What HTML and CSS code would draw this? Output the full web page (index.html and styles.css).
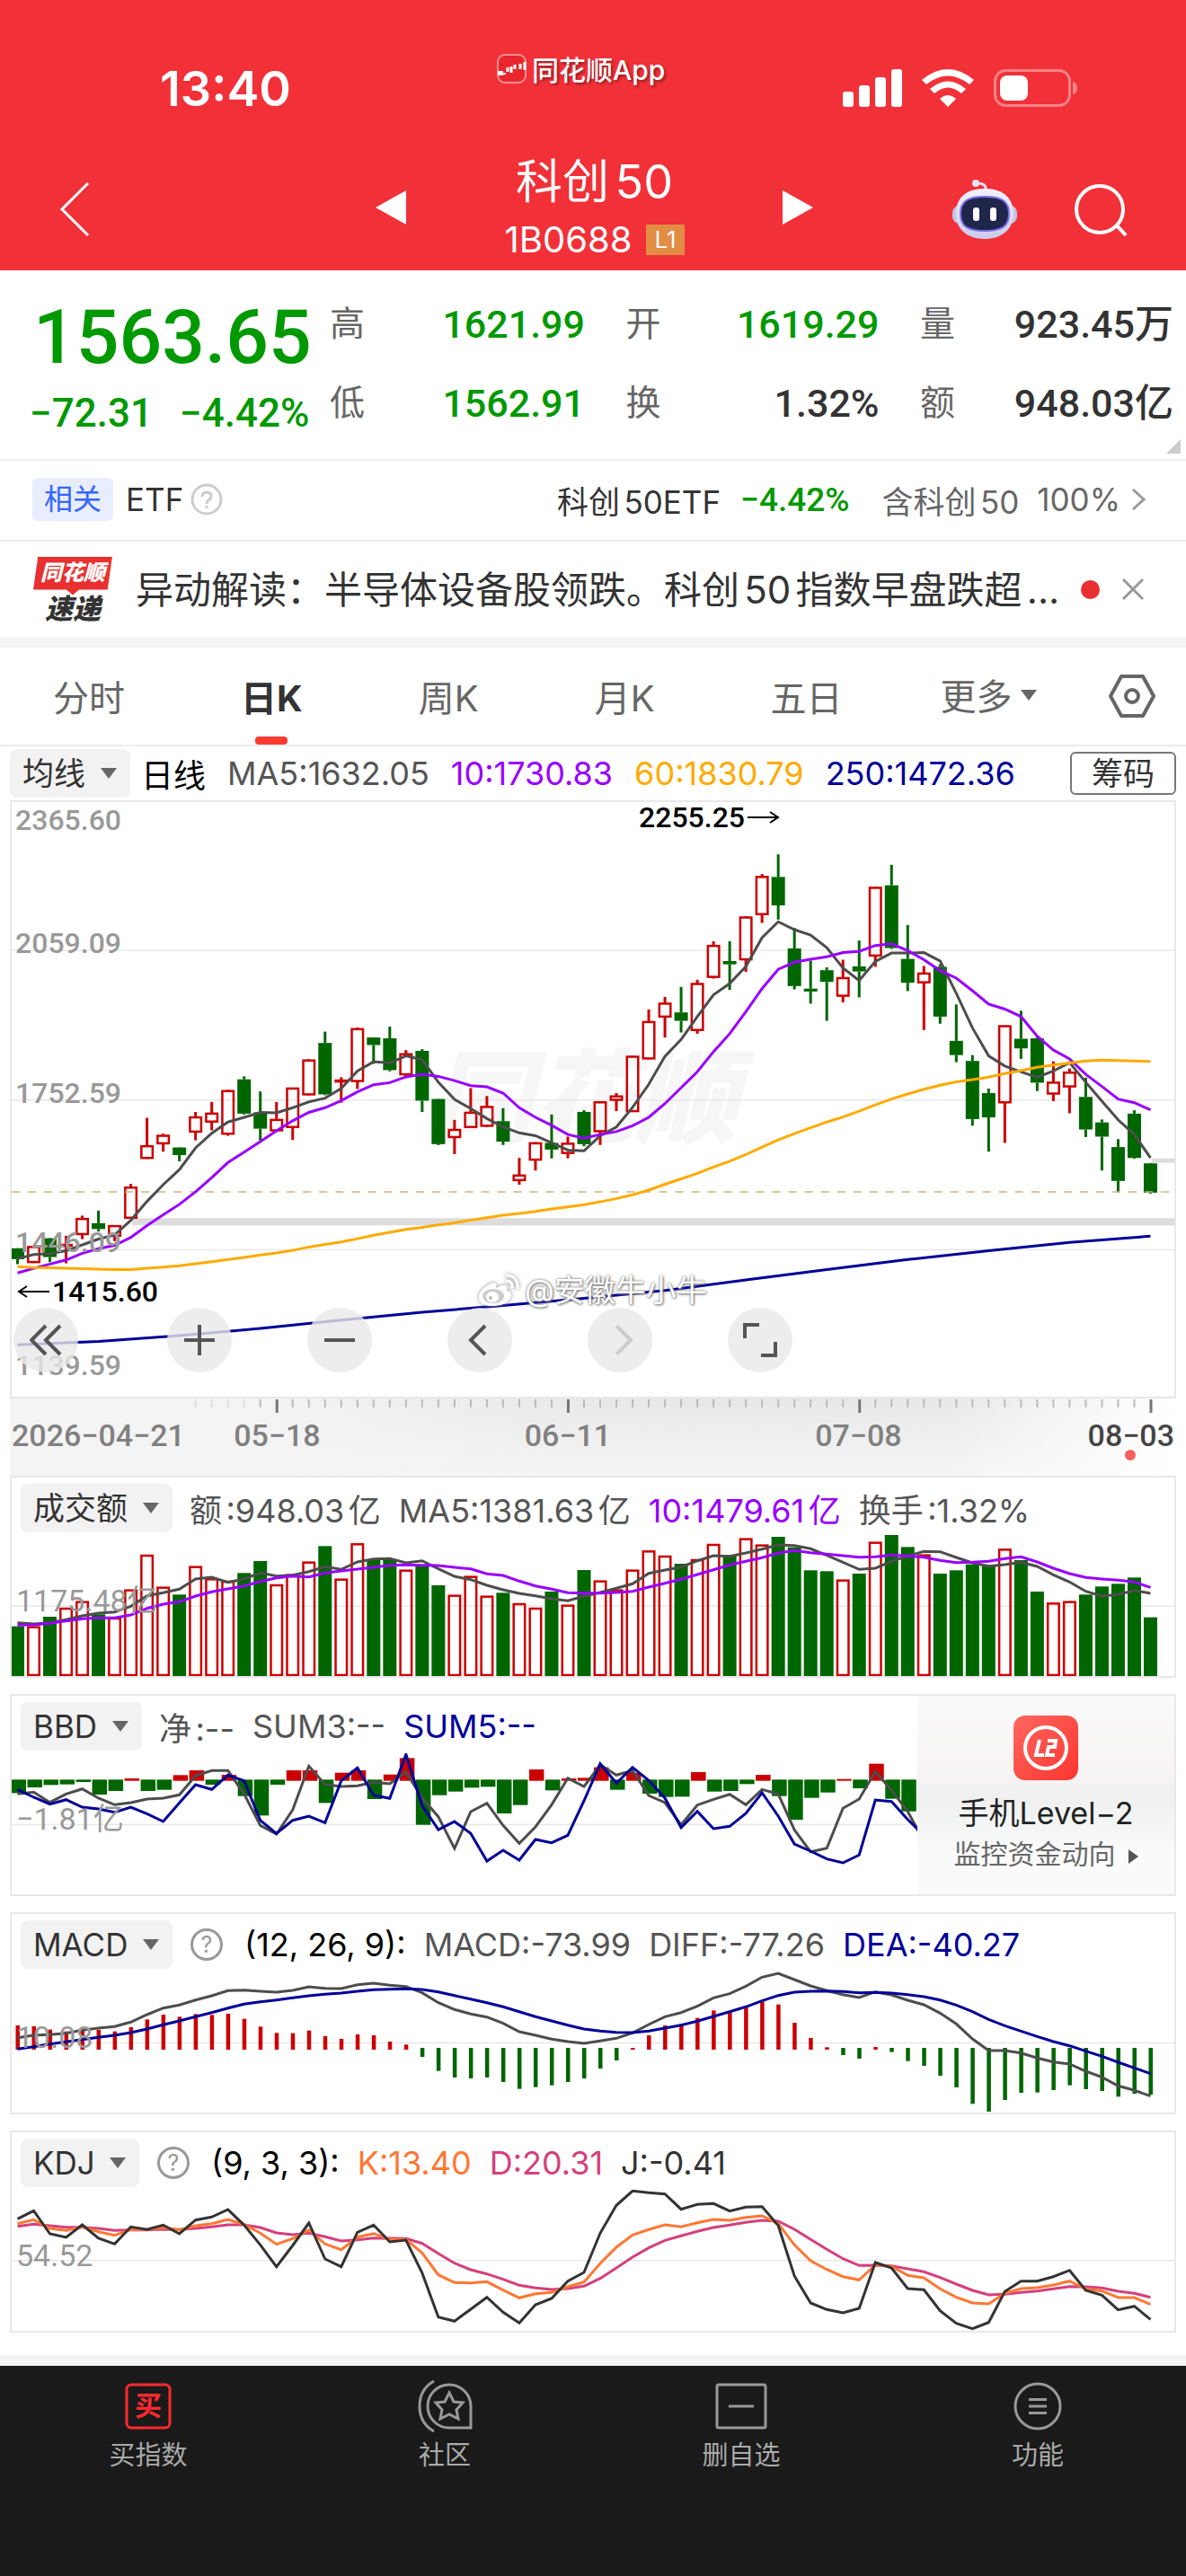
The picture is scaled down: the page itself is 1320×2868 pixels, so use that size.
FILE: index.html
```html
<!DOCTYPE html>
<html lang="zh-CN">
<head>
    <meta charset="utf-8">
    <meta name="viewport" content="width=device-width, initial-scale=1">
    <title>科创50 1B0688</title>
    <link rel="stylesheet" href="styles.css">
</head>
<body>
    <header class="top">
        <div class="status">
            <span class="clock">13:40</span>
            <span class="app-name">
                <svg width="33" height="33" viewBox="0 0 33 33"><rect x="1" y="1" width="31" height="31" rx="8" fill="#e8262c" stroke="#f88f93" stroke-width="2"/><path d="M2 20h4v3H2zM7 22h3" stroke="#fff" stroke-width="2" fill="#fff"/><path d="M12 15v5M16 21v-7M20 17v-5M26 11v6M31 9v9" fill="none" stroke="#fff" stroke-width="3"/></svg>
                同花顺App
            </span>
            <span class="phone">
                <svg width="66" height="42" viewBox="0 0 66 42" fill="#fff"><rect y="25" width="12" height="17" rx="3"/><rect x="18" y="18" width="12" height="24" rx="3"/><rect x="36" y="9" width="12" height="33" rx="3"/><rect x="54" width="12" height="42" rx="3"/></svg>
                <svg width="58" height="42" viewBox="0 0 58 42" fill="#fff"><path d="M29 42l-9-9q9-8 18 0z"/><path d="M14 27l-5-5q20-17 40 0l-5 5q-15-13-30 0z"/><path d="M5 17L0 12q29-24 58 0l-5 5q-24-19-48 0z"/></svg>
                <svg width="94" height="42" viewBox="0 0 94 42"><rect x="1.5" y="1.5" width="83" height="39" rx="12" fill="none" stroke="#f98387" stroke-width="3"/><rect x="7" y="7" width="31" height="28" rx="8" fill="#fff"/><path d="M88 14q5 1 5 7t-5 7z" fill="#f98387"/></svg>
            </span>
        </div>
        <div class="nav">
            <button class="icon-btn back" aria-label="返回"><svg width="34" height="62" viewBox="0 0 34 62"><path d="M32 2L3 31l29 29" fill="none" stroke="#fff" stroke-width="3"/></svg></button>
            <div class="stock">
                <button class="icon-btn" aria-label="上一个"><svg width="34" height="38" viewBox="0 0 34 38"><path d="M34 0v38L0 19z" fill="#fff"/></svg></button>
                <div class="stock-name">
                    <h1>科创50</h1>
                    <p>1B0688 <span class="l1">L1</span></p>
                </div>
                <button class="icon-btn" aria-label="下一个"><svg width="34" height="38" viewBox="0 0 34 38"><path d="M0 0v38l34-19z" fill="#fff"/></svg></button>
            </div>
            <div class="nav-right">
                <button class="icon-btn" aria-label="助手"><svg width="74" height="68" viewBox="0 0 74 68"><defs><linearGradient id="head" x2="0" y2="1"><stop stop-color="#f2f2fd"/><stop offset="1" stop-color="#c9cbea"/></linearGradient></defs><path d="M38 12Q39 5 28 5" fill="none" stroke="#dcddf3" stroke-width="3"/><circle cx="27" cy="5" r="4" fill="#e5e6f8"/><rect x="1" y="30" width="72" height="20" rx="8" fill="#c3c6e6"/><path d="M37 11c22 0 32 12 32 28S57 67 37 67 5 56 5 39s10-28 32-28z" fill="url(#head)"/><path d="M37 20c19 0 27 5 27 19s-8 19-27 19-27-5-27-19 8-19 27-19z" fill="#20264a" stroke="#7d6cf0" stroke-width="2"/><rect x="24" y="32" width="7" height="15" rx="3" fill="#fff"/><rect x="43" y="32" width="7" height="15" rx="3" fill="#fff"/></svg></button>
                <button class="icon-btn" aria-label="搜索"><svg width="62" height="62" viewBox="0 0 62 62" fill="none" stroke="#fff" stroke-width="4"><circle cx="29" cy="31" r="26"/><path d="M48 49l10 11"/></svg></button>
            </div>
        </div>
    </header>

    <section class="quote">
        <div class="price">
            <strong>1563.65</strong>
            <p><span>−72.31</span><span>−4.42%</span></p>
        </div>
        <dl>
            <div><dt>高</dt><dd class="down">1621.99</dd></div>
            <div><dt>开</dt><dd class="down">1619.29</dd></div>
            <div><dt>量</dt><dd>923.45万</dd></div>
            <div><dt>低</dt><dd class="down">1562.91</dd></div>
            <div><dt>换</dt><dd>1.32%</dd></div>
            <div><dt>额</dt><dd>948.03亿</dd></div>
        </dl>
        <i class="corner"></i>
    </section>

    <a class="related" href="#">
        <span class="tag">相关</span>
        <span>ETF</span>
        <svg width="36" height="36" viewBox="0 0 36 36" fill="none" stroke="#ccc" stroke-width="3"><circle cx="18" cy="18" r="16"/><path d="M13 15q0-5 5-5t5 4q0 3-3 5-2 1-2 4M18 25v3"/></svg>
        <span class="etf">科创50ETF</span>
        <span class="down num">−4.42%</span>
        <span class="grey">含科创50</span>
        <span class="grey">100%</span>
        <svg width="16" height="26" viewBox="0 0 16 26" fill="none" stroke="#999" stroke-width="3"><path d="M2 2l12 11L2 24"/></svg>
    </a>

    <section class="news">
        <span class="news-logo"><b>同花顺</b><em>速递</em></span>
        <a href="#">异动解读：半导体设备股领跌。科创50指数早盘跌超...</a>
        <i class="dot"></i>
        <button class="icon-btn" aria-label="关闭"><svg width="26" height="26" viewBox="0 0 26 26"><path d="M2 2l22 22M24 2L2 24" stroke="#999" stroke-width="3"/></svg></button>
    </section>

    <nav class="tabs">
        <button>分时</button>
        <button class="active">日K</button>
        <button>周K</button>
        <button>月K</button>
        <button>五日</button>
        <span class="drop more"><select aria-label="更多周期"><option>更多</option></select></span>
        <button class="icon-btn" aria-label="设置"><svg width="52" height="48" viewBox="0 0 52 48" fill="none" stroke="#666" stroke-width="4"><path d="M14 2h24l12 22-12 22H14L2 24z" stroke-linejoin="round"/><circle cx="26" cy="24" r="7"/></svg></button>
    </nav>

    <main class="charts">
        <div class="legend main-legend">
            <span class="drop"><select aria-label="主图指标"><option>均线</option></select></span>
            <span class="black">日线</span>
            <span>MA5:1632.05</span>
            <span class="purple">10:1730.83</span>
            <span class="orange">60:1830.79</span>
            <span class="navy">250:1472.36</span>
            <button class="chips">筹码</button>
        </div>
        <div class="kline">
            <b class="ghost">同花顺</b>
            <svg id="kline" viewBox="0 0 1293 662" preserveAspectRatio="none"></svg>
            <div class="scale num">
                <span>2365.60</span><span>2059.09</span><span>1752.59</span><span>1446.09</span><span>1139.59</span>
            </div>
            <span class="mark high num">2255.25<svg width="37" height="16" viewBox="0 0 37 16"><path d="M1 8h34M26 2l9 6-9 6" fill="none" stroke="#000" stroke-width="2"/></svg></span>
            <span class="mark low num"><svg width="37" height="16" viewBox="0 0 37 16"><path d="M36 8H2M11 2L2 8l9 6" fill="none" stroke="#000" stroke-width="2"/></svg>1415.60</span>
            <span class="weibo"><svg width="50" height="40" viewBox="0 0 50 40"><path d="M20 11q-9 2-15 10C-2 32 8 38 20 37q16-1 19-11 1-5-5-6 2-6-3-6t-9 3q2-5-2-6z" fill="#fff"/><ellipse cx="19" cy="26" rx="12" ry="8" fill="#ccc"/><ellipse cx="18" cy="27" rx="7" ry="6" fill="#fff"/><circle cx="16" cy="28" r="2" fill="#bbb"/><path d="M33 3q14 0 13 15M33 9q8 0 7 8" fill="none" stroke="#fff" stroke-width="3"/></svg>@安徽牛小牛</span>
            <div class="tools">
                <button aria-label="最早"><svg width="36" height="36" viewBox="0 0 36 36"><path d="M18 2L2 18l16 16M34 2L18 18l16 16"/></svg></button>
                <button aria-label="放大"><svg width="36" height="36" viewBox="0 0 36 36"><path d="M1 18h34M18 1v34"/></svg></button>
                <button aria-label="缩小"><svg width="36" height="36" viewBox="0 0 36 36"><path d="M1 18h34"/></svg></button>
                <button aria-label="左移"><svg width="36" height="36" viewBox="0 0 36 36"><path d="M24 2L8 18l16 16"/></svg></button>
                <button aria-label="右移" disabled><svg width="36" height="36" viewBox="0 0 36 36"><path d="M14 2l16 16-16 16"/></svg></button>
                <button aria-label="全屏"><svg width="38" height="38" viewBox="0 0 38 38"><path d="M2 17V2h16M36 21v15H20"/></svg></button>
            </div>
        </div>
        <div class="axis num">
            <svg id="ticks" viewBox="0 0 1293 16" preserveAspectRatio="none"></svg>
            <div class="dates"><span>2026−04−21</span><span>05−18</span><span>06−11</span><span>07−08</span><span class="now">08−03</span></div>
        </div>

        <section class="panel">
            <div class="legend">
                <span class="drop"><select aria-label="副图指标一"><option>成交额</option></select></span>
                <span>额:948.03亿</span><span>MA5:1381.63亿</span><span class="purple">10:1479.61亿</span><span>换手:1.32%</span>
            </div>
            <svg id="volume" viewBox="0 0 1293 157" preserveAspectRatio="none"></svg>
            <span class="level num">1175.48亿</span>
        </section>

        <section class="panel">
            <div class="legend">
                <span class="drop"><select aria-label="副图指标二"><option>BBD</option></select></span>
                <span>净:--</span><span>SUM3:--</span><span class="navy">SUM5:--</span>
            </div>
            <svg id="bbd" viewBox="0 0 1293 157" preserveAspectRatio="none"></svg>
            <span class="level num">−1.81亿</span>
            <a class="level2" href="#">
                <svg width="72" height="72" viewBox="0 0 72 72"><defs><linearGradient id="g" x2="1" y2="1"><stop stop-color="#ff6660"/><stop offset="1" stop-color="#fb362f"/></linearGradient></defs><rect width="72" height="72" rx="13" fill="url(#g)"/><circle cx="36" cy="36" r="23" fill="none" stroke="#fff" stroke-width="4"/><path d="M29 27l-4 17h9M38 28h9l-1 7h-7l-2 9h9" fill="none" stroke="#fff" stroke-width="4"/></svg>
                <strong>手机Level−2</strong>
                <small>监控资金动向</small>
            </a>
        </section>

        <section class="panel">
            <div class="legend">
                <span class="drop"><select aria-label="副图指标三"><option>MACD</option></select></span>
                <button class="help" aria-label="MACD说明">?</button>
                <span class="black">(12, 26, 9):</span><span>MACD:-73.99</span><span>DIFF:-77.26</span><span class="navy">DEA:-40.27</span>
            </div>
            <svg id="macd" viewBox="0 0 1293 157" preserveAspectRatio="none"></svg>
            <span class="level num">10.08</span>
        </section>

        <section class="panel">
            <div class="legend">
                <span class="drop"><select aria-label="副图指标四"><option>KDJ</option></select></span>
                <button class="help" aria-label="KDJ说明">?</button>
                <span class="black">(9, 3, 3):</span><span class="k">K:13.40</span><span class="d">D:20.31</span><span class="j">J:-0.41</span>
            </div>
            <svg id="kdj" viewBox="0 0 1293 157" preserveAspectRatio="none"></svg>
            <span class="level num">54.52</span>
        </section>
    </main>

    <footer class="bottom">
        <a href="#"><svg width="54" height="58" viewBox="0 0 54 58"><rect x="3" y="5" width="48" height="48" rx="5" fill="none" stroke="#ff2a2e" stroke-width="3"/><text x="27" y="39" text-anchor="middle" class="buy">买</text></svg>买指数</a>
        <a href="#"><svg width="62" height="58" viewBox="0 0 62 58" fill="none" stroke="#999" stroke-width="3"><path d="M19 1Q3 10 3 29t16 28"/><path d="M60 53V29A24 24 0 1 0 36 53z"/><path d="M36 14l5 10 10 1-7 8 2 10-10-5-10 5 2-10-7-8 10-1z"/></svg>社区</a>
        <a href="#"><svg width="58" height="58" viewBox="0 0 58 58" fill="none" stroke="#999" stroke-width="3"><rect x="2" y="5" width="54" height="48" rx="2"/><path d="M15 29h28"/></svg>删自选</a>
        <a href="#"><svg width="56" height="58" viewBox="0 0 56 58" fill="none" stroke="#999" stroke-width="3"><circle cx="28" cy="29" r="25"/><path d="M18 21.500h20M18 29h20M18 36.500h20"/></svg>功能</a>
    </footer>

    <script src="charts.js"></script>
</body>
</html>
```
FILE: styles.css
```css
* { box-sizing: border-box; }
body { margin: 0; font-family: Inter, "Noto Sans CJK SC", sans-serif; font-size: 35px; color: #333; background: #fff; }
h1, p, dl, dd { margin: 0; }
a { color: inherit; text-decoration: none; }
svg { display: block; flex: none; }
button, select { font: inherit; color: inherit; background: none; border: none; padding: 0; margin: 0; cursor: pointer; }
.num { font-family: Roboto, "Noto Sans CJK SC", sans-serif; }
.down { color: #009900; }
.grey { color: #666; }
.black { color: #000; }
.purple { color: #9900ff; }
.orange { color: #ffaa00; }
.navy { color: #000099; }
.k { color: #ff7733; }
.d { color: #d63f7c; }
.j { color: #333; }
h1, .etf, .related .grey, .news a, .legend { text-autospace: normal; }

/* red header */
.top { background: #f23038; color: #fff; height: 301px; }
.status { display: grid; grid-template-columns: 375px auto 1fr; align-items: center; height: 150px; padding: 46px 120px 0 178px; }
.clock { font-size: 54px; font-weight: 600; }
.app-name { display: flex; align-items: center; gap: 6px; font-size: 30px; font-weight: 500; padding-bottom: 44px; text-shadow: 2px 2px 3px rgba(0, 0, 0, 0.4); }
.phone { display: flex; justify-content: flex-end; gap: 22px; }
.nav { display: grid; grid-template-columns: 1fr 487px 1fr; align-items: center; height: 151px; padding: 14px 63px 0 66px; }
.stock { display: flex; justify-content: space-between; align-items: center; }
.stock > .icon-btn { margin-bottom: 4px; }
.stock-name { text-align: center; }
.stock-name h1 { font-size: 52px; line-height: 68px; font-weight: 400; }
.stock-name p { display: flex; align-items: center; gap: 16px; font-size: 40px; line-height: 60px; }
.l1 { background: #e28c44; font-size: 26px; line-height: 34px; padding: 0 9px; }
.nav-right { display: flex; justify-content: flex-end; align-items: center; gap: 62px; }

/* quote */
.quote { position: relative; display: flex; height: 212px; padding: 26px 14px 0 33px; border-bottom: 2px solid #ededed; font-family: Roboto, "Noto Sans CJK SC", sans-serif; font-weight: 500; font-size: 43px; }
.price { width: 334px; color: #009900; }
.price strong { display: block; padding-left: 4px; font-size: 84px; line-height: 98px; font-weight: 500; }
.price p { display: flex; gap: 30px; font-size: 44px; line-height: 70px; }
.quote dl { flex: 1; display: grid; grid-template-columns: 284px 282px 282px; justify-content: space-between; grid-auto-rows: 88px; }
.quote dl div { display: flex; justify-content: space-between; line-height: 68px; }
.quote dt { font-size: 39px; font-weight: 400; color: #666; }
.corner { position: absolute; right: 6px; bottom: 6px; border: 8px solid transparent; border-right-color: #ccc; border-bottom-color: #ccc; }

.related { display: flex; align-items: center; height: 90px; padding: 0 45px 2px 36px; border-bottom: 2px solid #ededed; font-size: 35px; }
.tag { color: #3366ff; background: #e8edff; border-radius: 6px; padding: 0 13px; line-height: 48px; font-size: 32px; margin-right: 14px; }
.related svg { margin-left: 8px; }
.etf { margin-left: auto; }
.related .down { margin: 0 36px 0 22px; font-weight: 500; font-size: 37px; }
.related .grey + .grey { margin-left: 20px; }
.related .grey + svg { margin-left: 12px; }

.news { display: flex; align-items: center; height: 118px; padding: 0 46px 0 37px; border-bottom: 12px solid #f4f4f4; font-size: 42px; }
.news-logo { width: 88px; margin-right: 26px; text-align: center; font-style: italic; font-weight: 900; }
.news-logo b, .news-logo em { display: block; }
.news-logo b { height: 43px; font-size: 24px; line-height: 36px; background: #e93030; color: #fff; clip-path: polygon(6% 0, 100% 0, 94% 86%, 58% 86%, 50% 100%, 42% 86%, 0 86%); }
.news-logo em { font-size: 31px; line-height: 30px; }
.news a { flex: 1; white-space: nowrap; padding-bottom: 6px; }
.dot { width: 21px; height: 21px; border-radius: 50%; background: #e93030; margin-right: 24px; }

/* period tabs */
.tabs { display: flex; gap: 129px; align-items: center; height: 110px; padding: 0 34px 0 59px; border-bottom: 2px solid #ededed; font-size: 40px; color: #666; }
.tabs button { position: relative; height: 108px; white-space: nowrap; }
.tabs .active { color: #333; font-weight: 700; }
.tabs .active::after { content: ""; position: absolute; left: 50%; bottom: 0; width: 36px; height: 9px; margin-left: -18px; border-radius: 4px; background: #fd3a30; }

.drop { position: relative; background: #f2f2f2; border-radius: 8px; color: #333; }
.drop select { appearance: none; display: block; height: 54px; padding: 0 49px 0 14px; }
.drop::after { content: ""; position: absolute; right: 15px; top: 21px; border: 9px solid transparent; border-top: 12px solid #666; border-bottom: 0; pointer-events: none; }
.tabs .more { background: none; color: #666; margin: 0 auto 0 -20px; }
.drop.more select { padding: 0 27px 0 0; height: 60px; }
.drop.more::after { right: 0; top: 23px; }
.tabs .more + button { margin-left: -129px; }

/* charts */
.charts { padding: 0 11px 25px; border-bottom: 12px solid #f4f4f4; }
.legend { display: flex; align-items: center; gap: 20px; height: 64px; padding: 3px 0 0 10px; color: #555; font-size: 36px; white-space: nowrap; }
.legend > .drop { margin-right: -1px; font-size: 35px; }
.main-legend { height: 60px; padding: 0; gap: 24px; }
.main-legend .drop { margin-right: -12px; }
.chips { margin-left: auto; width: 118px; height: 48px; border: 2px solid #777; border-radius: 6px; color: #333; font-size: 35px; line-height: 44px; }
.help { width: 36px; height: 36px; border: 3px solid #999; border-radius: 50%; color: #999; font-size: 25px; line-height: 30px; }
.legend .help { margin: 0 4px 0 1px; }

.kline { position: relative; border: 2px solid #e8e8e8; }
.kline > svg, .panel > svg, .axis > svg { position: relative; width: 100%; }
.kline > svg { height: 662px; }
.ghost { position: absolute; left: 466px; top: 260px; font-size: 114px; font-weight: 900; font-style: italic; line-height: 140px; color: #f6f6f6; }
.scale { position: absolute; left: 4px; top: 0; bottom: 15px; display: flex; flex-direction: column; justify-content: space-between; font-size: 32px; font-weight: 500; color: #999; }
.scale span { line-height: 40px; }
.scale span:nth-child(3) { margin-top: 30px; margin-bottom: 30px; }
.mark { position: absolute; display: flex; align-items: center; gap: 2px; font-size: 32px; line-height: 40px; font-weight: 500; color: #000; }
.high { left: 698px; top: -3px; }
.low { left: 6px; top: 525px; }
.weibo { position: absolute; left: 517px; top: 520px; display: flex; align-items: center; gap: 4px; color: #fff; font-size: 34px; line-height: 48px; text-shadow: 0 0 3px #777, 1px 1px 3px #777; }
.weibo svg { filter: drop-shadow(0 0 2px #888); }
.tools { position: absolute; left: 2px; top: 563px; display: flex; gap: 84px; }
.tools button { display: grid; place-items: center; width: 72px; height: 72px; border-radius: 50%; background: rgba(232, 232, 232, 0.8); }
.tools button:first-child { margin-right: 15px; }
.tools path { fill: none; stroke: #555; stroke-width: 4; }
.tools button:disabled path { stroke: #ccc; }

.axis { height: 86px; padding: 1px 2px 0; background: linear-gradient(90deg, #f4f4f4 20%, transparent 50%, transparent 80%, #fff), linear-gradient(#e8e8e8, #f5f5f5); font-size: 34px; font-weight: 500; color: #808080; }
.axis > svg { height: 16px; }
.dates { display: grid; grid-template-columns: 19.1% 25% 25% 1fr auto; line-height: 48px; }
.now { position: relative; color: #444; }
.now::after { content: ""; position: absolute; left: 41px; top: 40px; width: 12px; height: 12px; border-radius: 50%; background: #fa5e5e; }

.panel { position: relative; border: 2px solid #e8e8e8; margin-bottom: 18px; }
.panel:last-child { margin-bottom: 0; }
.panel > svg { height: 157px; }
.level { position: absolute; left: 5px; top: 113px; font-size: 34px; line-height: 48px; color: #999; }
.level2 { position: absolute; right: 0; top: 0; bottom: 0; width: 286px; padding-top: 22px; display: flex; flex-direction: column; align-items: center; background: linear-gradient(#fafafa, #f8f4f4 35%, #f0f0f0 52%, #f3f6f4 65%, #fafafa 80%); }
.level2 strong { margin-top: 14px; font-size: 34px; line-height: 46px; font-weight: 400; color: #222; }
.level2 small { font-size: 30px; line-height: 44px; color: #666; }
.level2 small::after { content: ""; display: inline-block; margin-left: 14px; border: 8px solid transparent; border-left: 11px solid #555; border-right: 0; }

/* bottom bar */
.bottom { display: grid; grid-template-columns: repeat(4, 1fr); height: 234px; padding-top: 16px; background: #1a1a1a; color: #aaa; font-size: 29px; line-height: 52px; }
.bottom a { display: flex; flex-direction: column; align-items: center; }
.buy { font-size: 30px; font-weight: 700; fill: #ff2a2e; }
```
FILE: charts.js
```javascript
const UP = "#cc0000", DOWN = "#006600";
const STEP = 18, FIRST = 6.5;
const x = i => FIRST + STEP * i;

// u = up day, d = down day: high, body top, body bottom, low
const candles = `d1052,1052,1078,1090 u1047,1049,1085,1085 d1028,1028,1073,1085 u1022,1044,1046,1088 u974,982,1018,1030
d962,992,1006,1012 u997,999,1022,1035 u898,907,979,980 u740,808,836,838 u778,783,801,821
d811,811,829,844 u726,739,773,794 u702,730,749,770 u673,676,778,783 d641,648,730,730
d677,727,766,794 u702,745,770,774 u668,670,762,793 u600,603,684,686 d534,561,684,686
u643,651,653,704 u524,528,652,671 d548,548,566,611 d522,550,626,629 u578,588,636,645
d576,580,699,726 d695,695,803,803 u745,769,786,827 u669,728,762,762 u688,714,759,762
d717,748,797,805 u836,878,889,900 u798,801,840,866 d732,800,816,837 u785,802,824,837
d722,726,803,808 u700,703,772,805 u681,689,697,724 u592,594,724,726 u481,511,598,600
u451,467,498,548 d427,488,508,536 u410,420,530,539 u318,329,403,407 d318,365,373,434
u258,261,361,391 u157,164,253,274 d110,164,232,266 d286,335,425,433 d364,431,438,467
d380,387,415,508 u362,406,448,464 d316,378,390,452 u187,190,352,379 d135,184,334,334
d279,360,417,437 u377,395,416,530 d373,379,498,515 d469,556,590,607 d590,604,743,759
d670,681,739,821 u519,521,703,800 d484,551,574,599 d548,550,656,676 u605,656,682,700
u622,632,665,729 d644,690,768,786 d744,751,785,866 d791,810,891,918 d722,730,836,836
d848,849,919,919`.split(/\s+/).map(s => ({ up: s[0] === "u", v: s.slice(1).split(",").map(Number) }));

const price = {
    ma5: [1077,1067,1065,1058,1044,1030,1020,985,940,900,864,812,777,750,739,727,728,716,702,693,670,628,606,609,592,601,655,696,718,742,762,776,783,800,817,819,783,762,715,660,593,553,498,446,419,378,309,271,290,303,333,382,412,366,346,346,345,365,442,525,592,616,630,643,628,608,655,700,745,780,836],
    ma10: [1111,1100,1090,1080,1064,1053,1045,1026,998,972,947,917,883,847,822,797,771,747,727,716,699,678,661,656,642,636,641,651,663,666,681,716,739,758,780,789,780,773,759,739,706,668,630,582,539,486,431,385,368,361,355,345,342,328,324,340,362,388,406,436,468,480,498,545,578,599,636,665,695,704,721],
    ma60: [1096,1098,1099,1100,1101,1102,1103,1103,1100,1097,1094,1089,1084,1079,1074,1068,1063,1057,1049,1043,1037,1029,1021,1014,1007,1002,996,991,985,979,973,969,964,958,953,948,941,933,924,913,899,886,873,858,844,828,810,793,778,764,750,738,724,709,695,683,672,662,654,649,643,634,627,619,614,609,604,602,603,604,605],
    ma250: [1283,1275,1261,1244,1224,1205,1189,1172,1153,1128,1103,1079,1058,1038,1023]
};

const volume = {
    bars: [542,542,510,480,458,502,513,419,303,410,436,341,382,390,364,324,402,368,326,274,383,265,320,318,353,340,405,437,374,440,430,465,480,426,470,354,389,419,353,289,306,333,318,267,304,248,269,243,278,355,358,386,366,260,237,277,302,366,355,335,338,283,321,426,463,458,436,409,400,379,512],
    ma5: [530,534,530,520,507,498,494,475,440,430,418,384,378,395,384,363,374,371,359,343,352,327,317,316,330,323,350,375,386,405,420,432,440,450,457,441,429,415,400,365,354,344,323,306,308,297,284,270,272,283,305,328,352,348,325,307,292,293,312,330,341,336,328,342,370,394,425,441,436,422,432],
    ma10: [538,537,532,524,517,514,514,504,482,468,460,441,427,417,407,392,380,374,377,364,357,351,345,338,337,338,339,345,350,367,372,391,407,418,430,431,431,429,425,411,398,385,369,353,337,325,313,297,289,296,301,306,311,310,304,307,311,322,329,328,325,316,310,327,348,366,379,384,388,394,412]
};

const bbd = {
    bars: [1099,1080,1072,1070,1062,1104,1092,1050,1092,1088,1039,1023,1071,1038,1109,1174,1071,1023,1023,1132,1031,1023,1119,1037,982,1205,1106,1094,1081,1078,1167,1139,1020,1090,1050,1048,1013,1088,1032,1101,1112,1111,1029,1094,1092,1069,1038,1109,1188,1115,1097,1052,1083,1001,1118,1160,1106],
    sum3: [1102,1096,1130,1102,1085,1116,1138,1131,1119,1116,1105,1041,1024,1024,1102,1207,1236,1155,1009,1070,1077,1075,1063,1068,1029,1115,1178,1284,1161,1133,1207,1267,1212,1138,1049,1077,1005,1039,1024,1107,1131,1205,1139,1120,1103,1138,1087,1102,1222,1295,1283,1150,1119,1027,1090,1160,1260],
    sum5: [1087,1113,1136,1121,1146,1152,1163,1146,1168,1194,1132,1071,1087,1039,1058,1190,1234,1190,1176,1198,1058,1015,1106,1117,970,1141,1221,1194,1234,1326,1290,1323,1254,1265,1240,1125,1001,1066,1013,1057,1116,1214,1160,1218,1210,1167,1098,1176,1269,1293,1319,1332,1306,1122,1127,1187,1240]
};

const macd = {
    bars: [405,408,419,425,420,420,425,411,385,369,376,367,370,366,383,409,430,431,422,441,450,435,438,459,469,510,557,579,582,579,594,617,611,605,594,582,549,522,480,438,405,400,380,355,360,341,325,335,396,447,478,504,516,477,494,524,540,573,612,667,693,654,630,629,621,605,618,624,643,633,636],
    diff: [446,438,436,431,421,414,409,394,369,347,337,320,306,289,287,291,294,288,276,281,282,269,264,271,275,296,329,352,367,377,398,426,438,451,459,465,457,448,430,402,376,362,341,313,299,274,244,231,252,273,289,302,312,293,303,321,336,364,400,450,489,489,497,514,527,534,558,578,607,622,641],
    dea: [484,476,467,460,452,445,438,429,417,403,390,376,362,347,334,326,320,313,306,301,297,291,286,284,283,285,293,305,317,329,343,359,376,390,404,417,424,428,429,424,414,404,391,375,359,343,323,305,294,291,290,292,296,295,297,302,309,320,337,359,385,406,424,442,459,473,491,508,528,547,566]
};

const kdj = {
    j: [1054,1027,1104,1116,1074,1119,1138,1081,1090,1075,1104,1058,1048,1023,1075,1141,1214,1143,1068,1188,1214,1099,1075,1131,1125,1235,1382,1396,1356,1316,1366,1402,1341,1320,1262,1233,1102,1009,961,967,971,1022,1006,1003,1028,1015,1013,1076,1245,1335,1357,1368,1353,1200,1218,1287,1291,1361,1403,1421,1400,1297,1262,1262,1247,1226,1293,1309,1358,1346,1390],
    k: [1070,1057,1086,1093,1080,1097,1109,1090,1090,1083,1091,1077,1070,1056,1073,1102,1139,1120,1091,1138,1157,1115,1103,1123,1123,1168,1241,1267,1268,1264,1292,1318,1304,1300,1281,1265,1203,1149,1108,1090,1074,1081,1067,1056,1059,1049,1044,1070,1141,1194,1223,1247,1258,1208,1213,1243,1251,1288,1316,1335,1338,1303,1287,1284,1275,1262,1288,1295,1317,1317,1340],
    d: [1079,1072,1077,1082,1082,1086,1093,1091,1091,1089,1090,1086,1081,1074,1074,1083,1101,1107,1102,1114,1128,1124,1118,1119,1120,1136,1170,1202,1224,1238,1256,1276,1285,1290,1287,1279,1253,1218,1182,1151,1126,1111,1096,1083,1075,1066,1059,1062,1089,1123,1156,1187,1210,1209,1211,1221,1231,1250,1272,1293,1308,1306,1300,1295,1288,1280,1281,1285,1296,1303,1316]
};

function rect(x, y, w, h, fill) {
    return `<rect x="${x}" y="${y}" width="${w}" height="${Math.max(h, 1)}" fill="${fill}"/>`;
}
function box(x, y, w, h) {
    return `<rect x="${x + 1.25}" y="${y + 1}" width="${w - 2.5}" height="${Math.max(h - 2, 1)}" fill="none" stroke="${UP}" stroke-width="2.5"/>`;
}
function line(values, y, color, step = 1) {
    const pts = values.map((v, i) => x(i * step) + "," + y(v).toFixed(1)).join(" ");
    return `<polyline points="${pts}" fill="none" stroke="${color}" stroke-width="3"/>`;
}
function grid(y) {
    return rect(0, y, 1293, 1.5, "#e8e8e8");
}
function draw(id, html) {
    document.getElementById(id).innerHTML = html;
}

function drawKline() {
    const y = v => v / 2.148 + 7;
    let out = [338, 696, 1054].map(v => grid(y(v))).join("");
    out += rect(134, y(980), 1159, 8, "#dcdcdc") + rect(1268, y(837), 25, 5, "#dcdcdc");
    candles.forEach((c, i) => {
        const [high, top, bottom, low] = c.v.map(y);
        const color = c.up ? UP : DOWN;
        out += rect(x(i) - 1.5, high, 3, top - high, color) + rect(x(i) - 1.5, bottom, 3, low - bottom, color);
        out += c.up ? box(x(i) - 7.5, top - 1, 15, bottom - top + 2) : rect(x(i) - 7.5, top, 15, bottom - top, color);
    });
    out += `<path d="M0 ${y(917)}H1293" stroke="#ccb27f" stroke-width="1.500" stroke-dasharray="9 9"/>`;
    out += line(price.ma5, y, "#4d4d4d") + line(price.ma10, y, "#9900ff") + line(price.ma60, y, "#ffaa00") + line(price.ma250, y, "#000099", 5);
    draw("kline", out);
}

function drawTicks() {
    let out = "";
    for (let i = 11; i < candles.length; i++) {
        const major = i % 18 === 16;
        out += rect(x(i) - 1, 0, major ? 3 : 2, major ? 15 : 9, major ? "#777" : i < 15 ? "#ddd" : "#bbb");
    }
    draw("ticks", out);
}

function drawVolume() {
    const y = v => (v - 237) / 3;
    let out = grid(y(472));
    volume.bars.forEach((v, i) => {
        out += candles[i].up ? box(x(i) - 7.5, y(v), 15, 157 - y(v)) : rect(x(i) - 7.5, y(v), 15, 157 - y(v), DOWN);
    });
    draw("volume", out + line(volume.ma5, y, "#4d4d4d") + line(volume.ma10, y, "#9900ff"));
}

function drawBbd() {
    const y = v => (v - 966) / 3;
    let out = grid(y(1202));
    bbd.bars.forEach((v, i) => {
        out += v < 1056 ? rect(x(i) - 7, y(v), 16.5, y(1058) - y(v), UP) : rect(x(i) - 7, y(1054), 16.5, y(v) - y(1054), DOWN);
    });
    draw("bbd", out + line(bbd.sum3, y, "#4d4d4d") + line(bbd.sum5, y, "#000099"));
}

function drawMacd() {
    const y = v => (v - 225) / 3;
    let out = grid(y(461));
    macd.bars.forEach((v, i) => {
        out += v < 483 ? rect(x(i) - 2, y(v), 4.5, y(486) - y(v), UP) : rect(x(i) - 2, y(480), 4.5, y(v) - y(480), DOWN);
    });
    draw("macd", out + line(macd.diff, y, "#4d4d4d") + line(macd.dea, y, "#000099"));
}

function drawKdj() {
    const y = v => (v - 957) / 3;
    draw("kdj", grid(y(1191)) + line(kdj.d, y, "#d63f7c") + line(kdj.k, y, "#ff7733") + line(kdj.j, y, "#333"));
}

drawKline();
drawTicks();
drawVolume();
drawBbd();
drawMacd();
drawKdj();
```
